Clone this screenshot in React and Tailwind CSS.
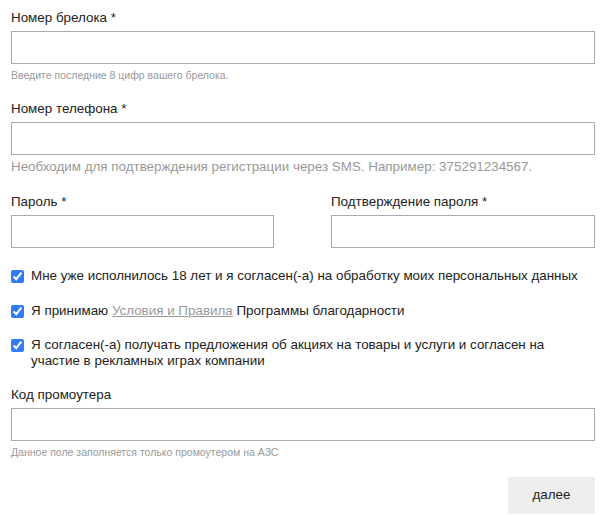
import { useState } from "react";

const font = { fontFamily: '"Liberation Sans", Arial, sans-serif' };

const Field = ({ label, className = "" }) => (
  <div className={className}>
    <label className="block text-[13.4px] leading-[16px] text-[#222]">{label}</label>
    <input
      type="text"
      className="mt-[5px] block h-[33px] w-full border border-[#aaa] bg-white px-2 text-[13px] outline-none"
    />
  </div>
);

const Check = ({ children, className = "" }) => (
  <label className={`flex items-start gap-[7px] text-[13.4px] leading-[16px] text-[#222] ${className}`}>
    <input
      type="checkbox"
      defaultChecked
      className="mt-[2px] h-[13px] w-[13px] shrink-0 accent-[#2f7cf6]"
    />
    <span>{children}</span>
  </label>
);

export default function App() {
  const [sent, setSent] = useState(false);

  return (
    <div className="min-h-[515px] bg-white pl-[11px] pr-[5px] pt-[10px]" style={font}>
      <Field label="Номер брелока *" />
      <p className="mt-[5px] text-[10.5px] leading-[12px] text-[#999]">
        Введите последние 8 цифр вашего брелока.
      </p>

      <Field label="Номер телефона *" className="mt-[20px]" />
      <p className="mt-[4px] text-[13.4px] leading-[16px] text-[#999]">
        Необходим для подтверждения регистрации через SMS. Например: 375291234567.
      </p>

      <div className="mt-[19px] flex gap-[57px]">
        <Field label="Пароль *" className="w-[263px]" />
        <Field label="Подтверждение пароля *" className="flex-1" />
      </div>

      <Check className="mt-[20px]">
        Мне уже исполнилось 18 лет и я согласен(-а) на обработку моих персональных данных
      </Check>
      <Check className="mt-[19px]">
        Я принимаю{" "}
        <a href="#" className="text-[#999] underline">
          Условия и Правила
        </a>{" "}
        Программы благодарности
      </Check>
      <Check className="mt-[18px] pr-[40px]">
        Я согласен(-а) получать предложения об акциях на товары и услуги и согласен на участие в рекламных играх компании
      </Check>

      <Field label="Код промоутера" className="mt-[18px]" />
      <p className="mt-[5px] text-[10.5px] leading-[12px] text-[#999]">
        Данное поле заполняется только промоутером на АЗС
      </p>

      <div className="mt-[19px] flex justify-end">
        <button
          type="button"
          onClick={() => setSent(!sent)}
          className="h-[37px] w-[87px] bg-[#eee] text-[13.4px] text-[#222]"
        >
          далее
        </button>
      </div>
    </div>
  );
}
